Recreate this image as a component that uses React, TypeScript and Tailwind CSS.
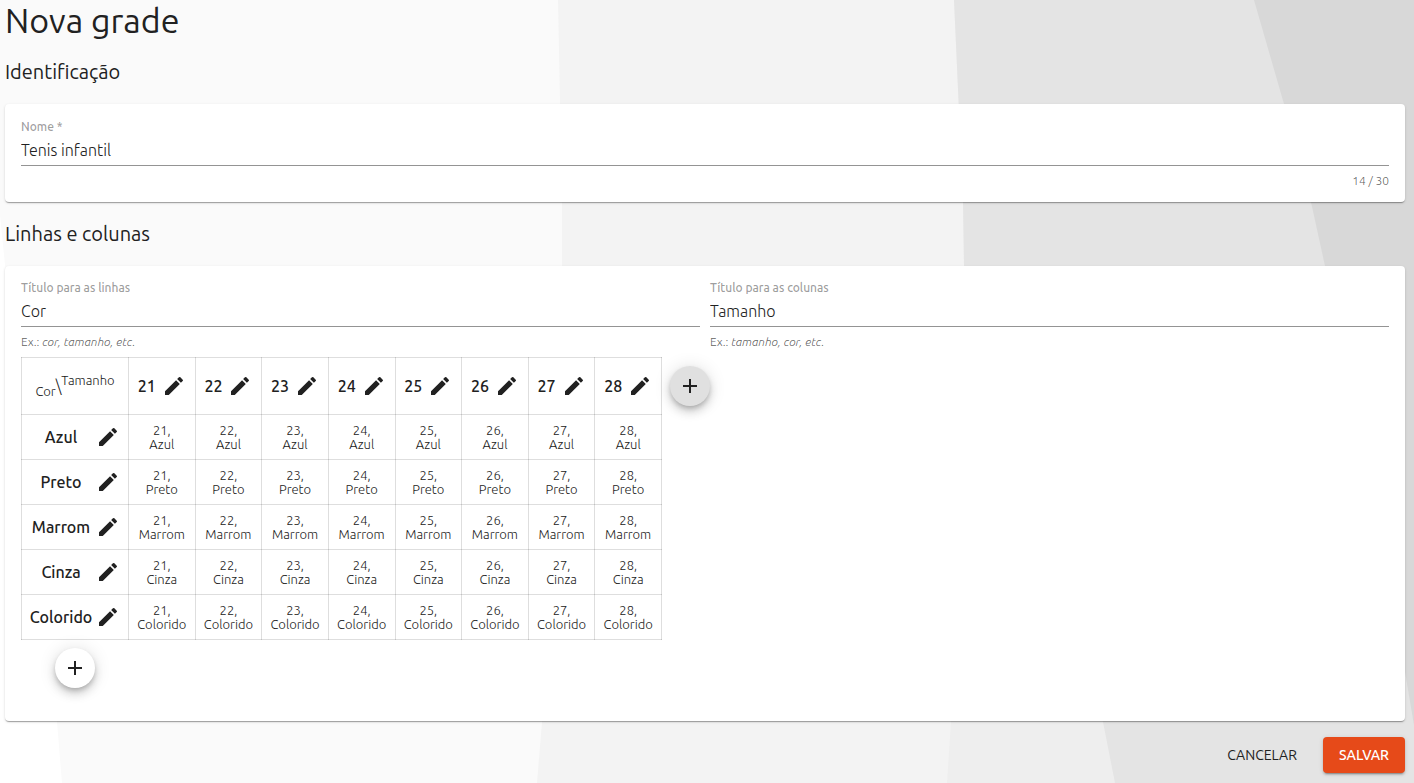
import { useState } from "react";

const SIZES = ["21", "22", "23", "24", "25", "26", "27", "28"];
const COLORS = ["Azul", "Preto", "Marrom", "Cinza", "Colorido"];

function PencilIcon() {
  return (
    <svg viewBox="0 0 24 24" className="size-6 shrink-0" fill="currentColor" aria-hidden="true">
      <path d="M3 17.25V21h3.75L17.81 9.94l-3.75-3.75L3 17.25zM20.71 7.04a.996.996 0 0 0 0-1.41l-2.34-2.34a.996.996 0 0 0-1.41 0l-1.83 1.83 3.75 3.75 1.83-1.83z" />
    </svg>
  );
}

function PlusIcon() {
  return (
    <svg viewBox="0 0 24 24" className="size-6" fill="currentColor" aria-hidden="true">
      <path d="M19 13h-6v6h-2v-6H5v-2h6V5h2v6h6v2z" />
    </svg>
  );
}

function Backdrop() {
  return (
    <svg
      className="absolute inset-0 -z-10 h-full w-full"
      viewBox="0 0 1414 783"
      preserveAspectRatio="none"
      aria-hidden="true"
    >
      <rect width="1414" height="783" fill="#fff" />
      <path d="M0 0H1414V783H62L57 722L5 265L0 215Z" fill="#fafafa" />
      <path d="M558 0L562 200V266L542 722L537 783H1414V0Z" fill="#f3f3f3" />
      <path d="M954 0L963 200L964 266L951 722L947 783H1414V0Z" fill="#eee" />
      <path d="M954 0L963 200L964 266L1103 722L1115 783H1414V0Z" fill="#e4e4e4" />
      <path d="M1254 0L1284 104L1311 202L1325 266L1405 672L1414 725V0Z" fill="#d8d8d8" />
    </svg>
  );
}

function AddButton({ label, className }: { label: string; className: string }) {
  return (
    <button
      type="button"
      aria-label={label}
      className={`flex size-10 shrink-0 items-center justify-center rounded-full shadow-[0_3px_5px_-1px_rgba(0,0,0,0.2),0_6px_10px_0_rgba(0,0,0,0.14),0_1px_18px_0_rgba(0,0,0,0.12)] ${className}`}
    >
      <PlusIcon />
    </button>
  );
}

interface FieldProps {
  id: string;
  label: string;
  value: string;
  onChange: (value: string) => void;
  maxLength?: number;
  children: React.ReactNode;
}

function Field({ id, label, value, onChange, maxLength, children }: FieldProps) {
  return (
    <div className="flex min-w-0 flex-1 flex-col">
      <label htmlFor={id} className="text-[12px] leading-[14px] font-medium text-black/40">
        {label}
      </label>
      <input
        id={id}
        value={value}
        maxLength={maxLength}
        onChange={(e) => onChange(e.target.value)}
        className="h-8 w-full border-b border-[#949494] bg-transparent text-[16px] font-light outline-none"
      />
      <div className="mt-2 text-[12px] leading-[14px] font-light text-black/65">{children}</div>
    </div>
  );
}

const card =
  "rounded bg-white px-4 shadow-[0_2px_1px_-1px_rgba(0,0,0,0.2),0_1px_1px_0_rgba(0,0,0,0.14),0_1px_3px_0_rgba(0,0,0,0.12)]";

export default function App() {
  const [name, setName] = useState("Tenis infantil");
  const [rowTitle, setRowTitle] = useState("Cor");
  const [colTitle, setColTitle] = useState("Tamanho");

  return (
    <main className="relative isolate min-h-screen overflow-hidden pr-[9px] pb-2.5 pl-[5px] font-['Ubuntu','Noto_Sans',sans-serif] text-[#212121]">
      <Backdrop />
      <h1 className="text-[34px] leading-10">Nova grade</h1>

      <h2 className="my-4 text-[20px] leading-8">Identificação</h2>
      <section className={`${card} pt-4 pb-3.5`}>
        <Field id="nome" label="Nome *" value={name} onChange={setName} maxLength={30}>
          <p className="text-right">{name.length} / 30</p>
        </Field>
      </section>

      <h2 className="my-4 text-[20px] leading-8">Linhas e colunas</h2>
      <section className={`${card} pt-[15px] pb-[33px]`}>
        <div className="flex gap-2.5">
          <Field id="linhas" label="Título para as linhas" value={rowTitle} onChange={setRowTitle}>
            Ex.: <i>cor, tamanho, etc.</i>
          </Field>
          <Field id="colunas" label="Título para as colunas" value={colTitle} onChange={setColTitle}>
            Ex.: <i>tamanho, cor, etc.</i>
          </Field>
        </div>

        <div className="mt-2 flex items-start gap-2">
          <table className="w-[641px] table-fixed border-collapse text-center [&_td]:border [&_td]:border-black/13 [&_th]:border [&_th]:border-black/13">
            <colgroup>
              <col className="w-[107px]" />
              {SIZES.map((size) => (
                <col key={size} />
              ))}
            </colgroup>
            <thead>
              <tr className="h-[57px]">
                <td className="text-[13px] leading-4 whitespace-nowrap">
                  <div className="flex items-center justify-center font-light">
                    <span className="pt-2.5">{rowTitle}</span>
                    <span className="text-base">\</span>
                    <span className="pb-3">{colTitle}</span>
                  </div>
                </td>
                {SIZES.map((size) => (
                  <th key={size} scope="col" className="text-[16px] font-medium">
                    <div className="flex items-center justify-center gap-1.5">
                      {size}
                      <button type="button" aria-label={`Editar ${size}`}>
                        <PencilIcon />
                      </button>
                    </div>
                  </th>
                ))}
              </tr>
            </thead>
            <tbody>
              {COLORS.map((color) => (
                <tr key={color} className="h-[45px]">
                  <th scope="row" className="text-[16px] font-medium">
                    <div className="flex items-center pr-2 pl-1">
                      <span className="flex-1">{color}</span>
                      <button type="button" aria-label={`Editar ${color}`}>
                        <PencilIcon />
                      </button>
                    </div>
                  </th>
                  {SIZES.map((size) => (
                    <td key={size} className="text-[13px] leading-[14px] font-light">
                      {size},
                      <br />
                      {color}
                    </td>
                  ))}
                </tr>
              ))}
            </tbody>
          </table>
          <AddButton label="Adicionar coluna" className="mt-[9px] bg-[#e0e0e0]" />
        </div>
        <AddButton label="Adicionar linha" className="mt-2 ml-[34px] bg-white" />
      </section>

      <footer className="mt-4 flex justify-end gap-2.5 text-[14px]">
        <button type="button" className="h-9 rounded px-4">
          CANCELAR
        </button>
        <button
          type="button"
          className="h-9 rounded bg-[#e64a19] px-4 font-medium text-white shadow-[0_3px_1px_-2px_rgba(0,0,0,0.2),0_2px_2px_0_rgba(0,0,0,0.14),0_1px_5px_0_rgba(0,0,0,0.12)]"
        >
          SALVAR
        </button>
      </footer>
    </main>
  );
}
